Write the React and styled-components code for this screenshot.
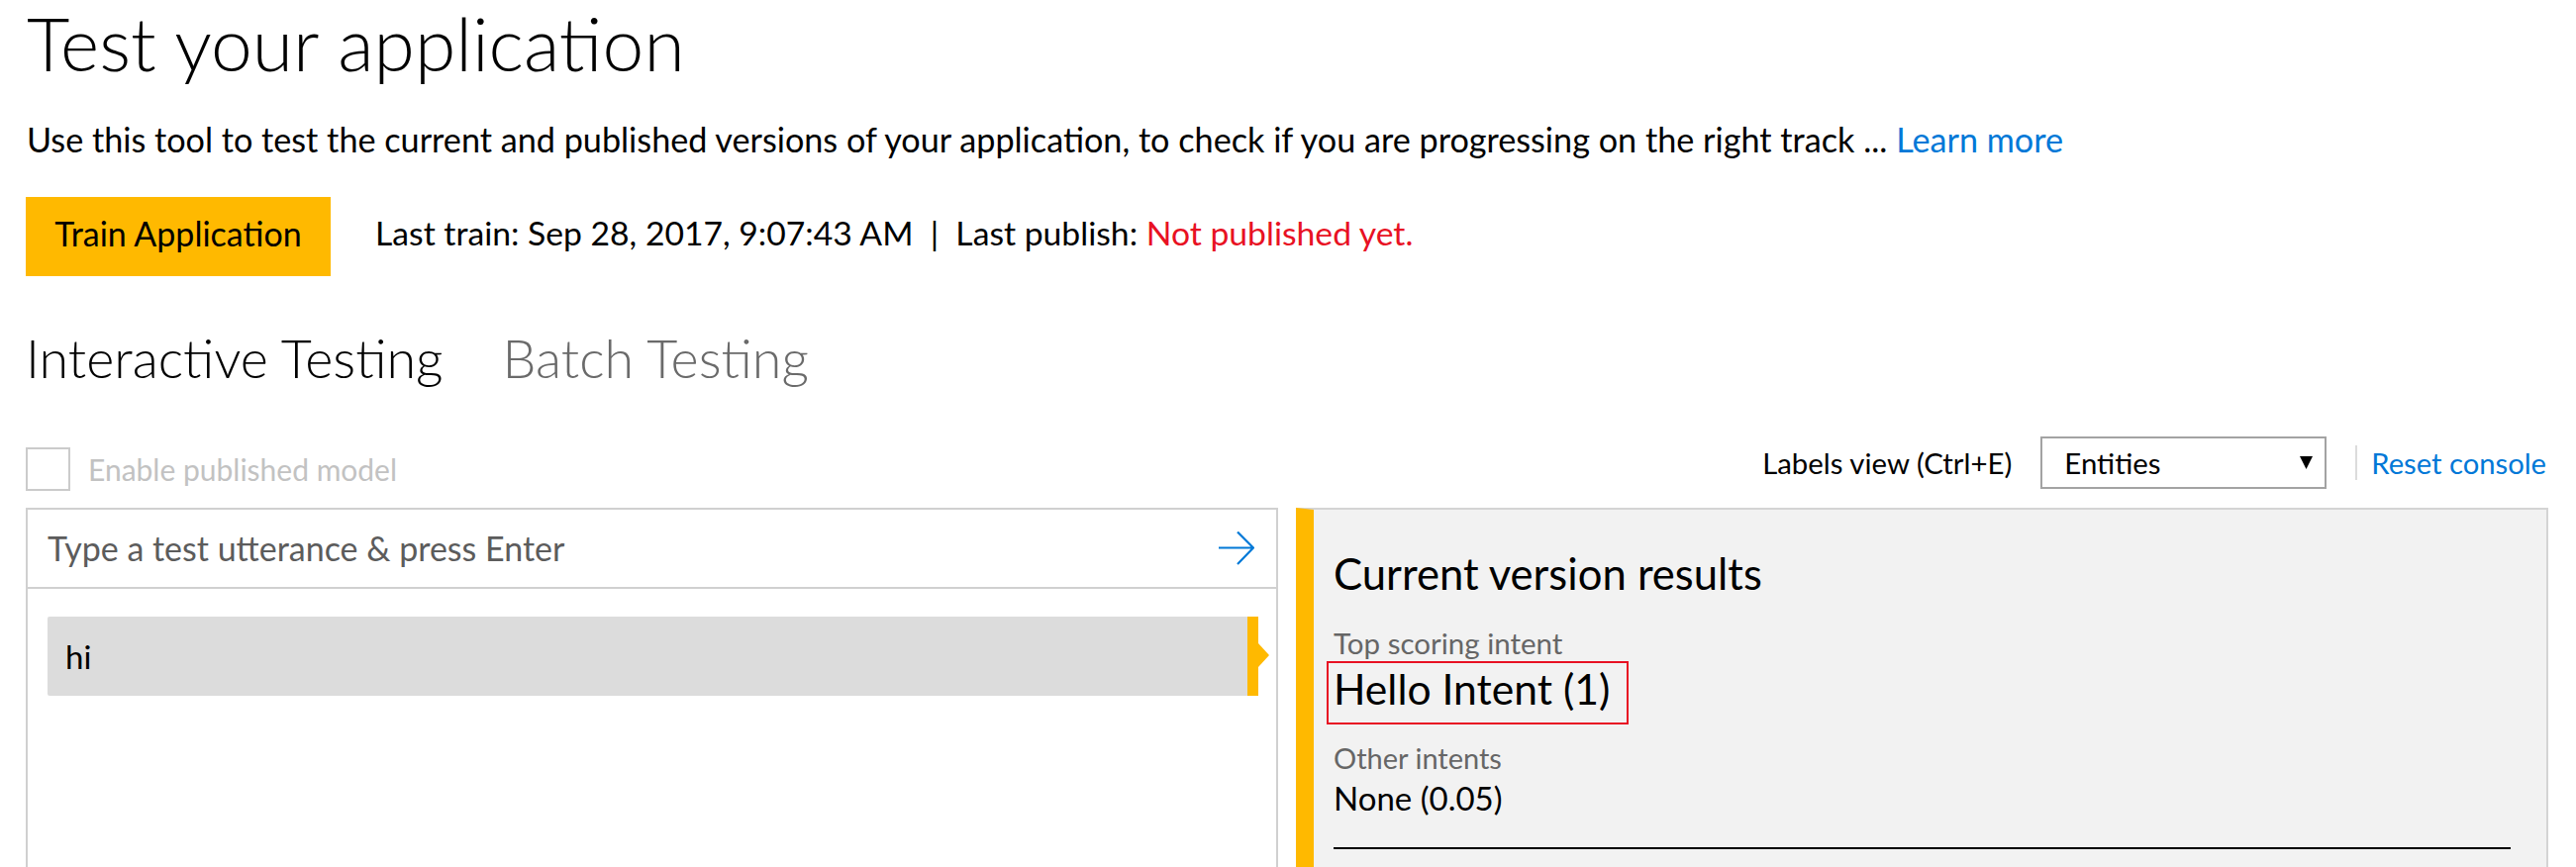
import React from "react";
import styled, { createGlobalStyle } from "styled-components";

const GlobalStyle = createGlobalStyle`
  html, body {
    margin: 0;
    padding: 0;
    background: #ffffff;
    overflow: hidden;
  }
  body {
    font-family: "Lato", "Open Sans", "Liberation Sans", sans-serif;
    color: #000000;
  }
  * { box-sizing: border-box; }
`;

const Page = styled.div`
  padding: 0 28px 0 26px;
  width: 2602px;
`;

const Title = styled.h1`
  margin: 0;
  font-size: 75px;
  line-height: 87px;
  font-weight: 300;
  padding-left: 1px;
`;

const Description = styled.p`
  margin: 34px 0 0 0;
  font-size: 34.2px;
  line-height: 40px;
  font-weight: 400;
  padding-left: 1px;
`;

const Link = styled.a`
  color: #0078d7;
  text-decoration: none;
  cursor: pointer;
`;

const ActionRow = styled.div`
  display: flex;
  align-items: flex-start;
  margin-top: 38px;
  height: 80px;
`;

const TrainButton = styled.button`
  width: 308px;
  height: 80px;
  border: none;
  background: #ffb900;
  font-family: inherit;
  font-size: 34px;
  line-height: 40px;
  padding: 17px 0 23px;
  color: #000;
  cursor: pointer;
`;

const TrainInfo = styled.div`
  margin: 16px 0 0 45px;
  font-size: 33.7px;
  line-height: 40px;
  white-space: pre;
`;

const Warning = styled.span`
  color: #e81123;
`;

const Tabs = styled.div`
  display: flex;
  gap: 60px;
  margin-top: 49px;
`;

const Tab = styled.div`
  font-size: 53.8px;
  line-height: 66px;
  font-weight: 300;
  color: ${(p) => (p.$active ? "#000000" : "#6a6a6a")};
  cursor: pointer;
`;

const ControlsRow = styled.div`
  display: flex;
  justify-content: space-between;
  align-items: flex-end;
  margin-top: 47px;
  height: 55px;
`;

const CheckGroup = styled.label`
  display: flex;
  align-items: center;
  gap: 18px;
`;

const CheckBox = styled.span`
  display: block;
  width: 45px;
  height: 44px;
  border: 2px solid #cbcbcb;
  background: #fff;
`;

const CheckLabel = styled.span`
  font-size: 30px;
  line-height: 44px;
  color: #c2c2c2;
`;

const ViewGroup = styled.div`
  display: flex;
  align-items: center;
  margin-bottom: 2px;
`;

const ViewLabel = styled.span`
  font-size: 29.4px;
  line-height: 40px;
  margin-right: 29px;
`;

const Select = styled.div`
  width: 289px;
  height: 53px;
  border: 2px solid #a3a3a3;
  background: #fff;
  display: flex;
  align-items: center;
  justify-content: space-between;
  padding: 0 12px 0 22px;
  font-size: 29.4px;
  line-height: 40px;
`;

const Separator = styled.span`
  width: 2px;
  height: 35px;
  background: #dcdcdc;
  margin: 0 14px 0 29px;
`;

const ResetLink = styled(Link)`
  font-size: 29.2px;
  line-height: 40px;
  margin-right: 2px;
`;

const Panels = styled.div`
  display: grid;
  grid-template-columns: 1fr 1fr;
  gap: 18px;
  margin-top: 17px;
`;

const TestPanel = styled.div`
  border: 2px solid #d0d0d0;
  height: 420px;
  background: #fff;
`;

const InputRow = styled.div`
  display: flex;
  align-items: center;
  justify-content: space-between;
  height: 80px;
  padding: 0 22px 0 20px;
  border-bottom: 2px solid #d0d0d0;
`;

const Placeholder = styled.span`
  font-size: 34px;
  line-height: 40px;
  color: #5c5c5c;
`;

const UtteranceList = styled.div`
  padding: 28px 7px 0 20px;
`;

const Utterance = styled.div`
  display: flex;
  height: 80px;
`;

const UtteranceText = styled.div`
  flex: 1;
  display: flex;
  align-items: center;
  background: #dcdcdc;
  border-radius: 2px 0 0 2px;
  padding-left: 18px;
  font-size: 33px;
  line-height: 40px;
`;

const SelectedMarker = styled.div`
  position: relative;
  width: 11px;
  background: #ffb900;
  margin-right: 11px;
  &::after {
    content: "";
    position: absolute;
    left: 11px;
    top: 27px;
    border-left: 11px solid #ffb900;
    border-top: 12.5px solid transparent;
    border-bottom: 12.5px solid transparent;
  }
`;

const ResultPanel = styled.div`
  height: 420px;
  background: #f2f2f2;
  border-top: 2px solid #d4d4d4;
  border-right: 2px solid #d4d4d4;
  border-left: 18px solid #ffb900;
  padding: 38px 36px 0 20px;
`;

const ResultTitle = styled.h2`
  margin: 0;
  font-size: 43.6px;
  line-height: 52px;
  font-weight: 400;
`;

const FieldLabel = styled.div`
  font-size: ${(p) => p.$size}px;
  line-height: 36px;
  color: #666666;
  margin-top: ${(p) => p.$gap}px;
`;

const TopIntent = styled.div`
  display: inline-block;
  margin-left: -7px;
  border: 2px solid #e81123;
  padding: 0 17px 8px 5px;
  font-size: 42.6px;
  line-height: 52px;
`;

const IntentValue = styled.div`
  font-size: 33px;
  line-height: 40px;
  margin-top: 2px;
`;

const Rule = styled.div`
  height: 2px;
  background: #000;
  margin-top: 30px;
`;

const ArrowIcon = () => (
  <svg width="36" height="34" viewBox="0 0 36 34" fill="none">
    <path d="M0 16.5H35M19 0.5L35 16.5L19 33" stroke="#0078d7" strokeWidth="2.2" />
  </svg>
);

const CaretDown = () => (
  <svg width="13" height="13" viewBox="0 0 13 13">
    <polygon points="0,0 13,0 6.5,13" fill="#000" />
  </svg>
);

export default function App() {
  return (
    <>
      <GlobalStyle />
      <Page>
        <Title>Test your application</Title>
        <Description>
          Use this tool to test the current and published versions of your application, to check if you are progressing on the right track ...{" "}
          <Link>Learn more</Link>
        </Description>
        <ActionRow>
          <TrainButton>Train Application</TrainButton>
          <TrainInfo>
            {"Last train: Sep 28, 2017, 9:07:43 AM  |  Last publish: "}
            <Warning>Not published yet.</Warning>
          </TrainInfo>
        </ActionRow>
        <Tabs>
          <Tab $active>Interactive Testing</Tab>
          <Tab>Batch Testing</Tab>
        </Tabs>
        <ControlsRow>
          <CheckGroup>
            <CheckBox />
            <CheckLabel>Enable published model</CheckLabel>
          </CheckGroup>
          <ViewGroup>
            <ViewLabel>Labels view (Ctrl+E)</ViewLabel>
            <Select>
              <span>Entities</span>
              <CaretDown />
            </Select>
            <Separator />
            <ResetLink>Reset console</ResetLink>
          </ViewGroup>
        </ControlsRow>
        <Panels>
          <TestPanel>
            <InputRow>
              <Placeholder>Type a test utterance &amp; press Enter</Placeholder>
              <ArrowIcon />
            </InputRow>
            <UtteranceList>
              <Utterance>
                <UtteranceText>hi</UtteranceText>
                <SelectedMarker />
              </Utterance>
            </UtteranceList>
          </TestPanel>
          <ResultPanel>
            <ResultTitle>Current version results</ResultTitle>
            <FieldLabel $gap={27} $size={29.5}>Top scoring intent</FieldLabel>
            <TopIntent>Hello Intent (1)</TopIntent>
            <FieldLabel $gap={16} $size={29}>Other intents</FieldLabel>
            <IntentValue>None (0.05)</IntentValue>
            <Rule />
          </ResultPanel>
        </Panels>
      </Page>
    </>
  );
}
